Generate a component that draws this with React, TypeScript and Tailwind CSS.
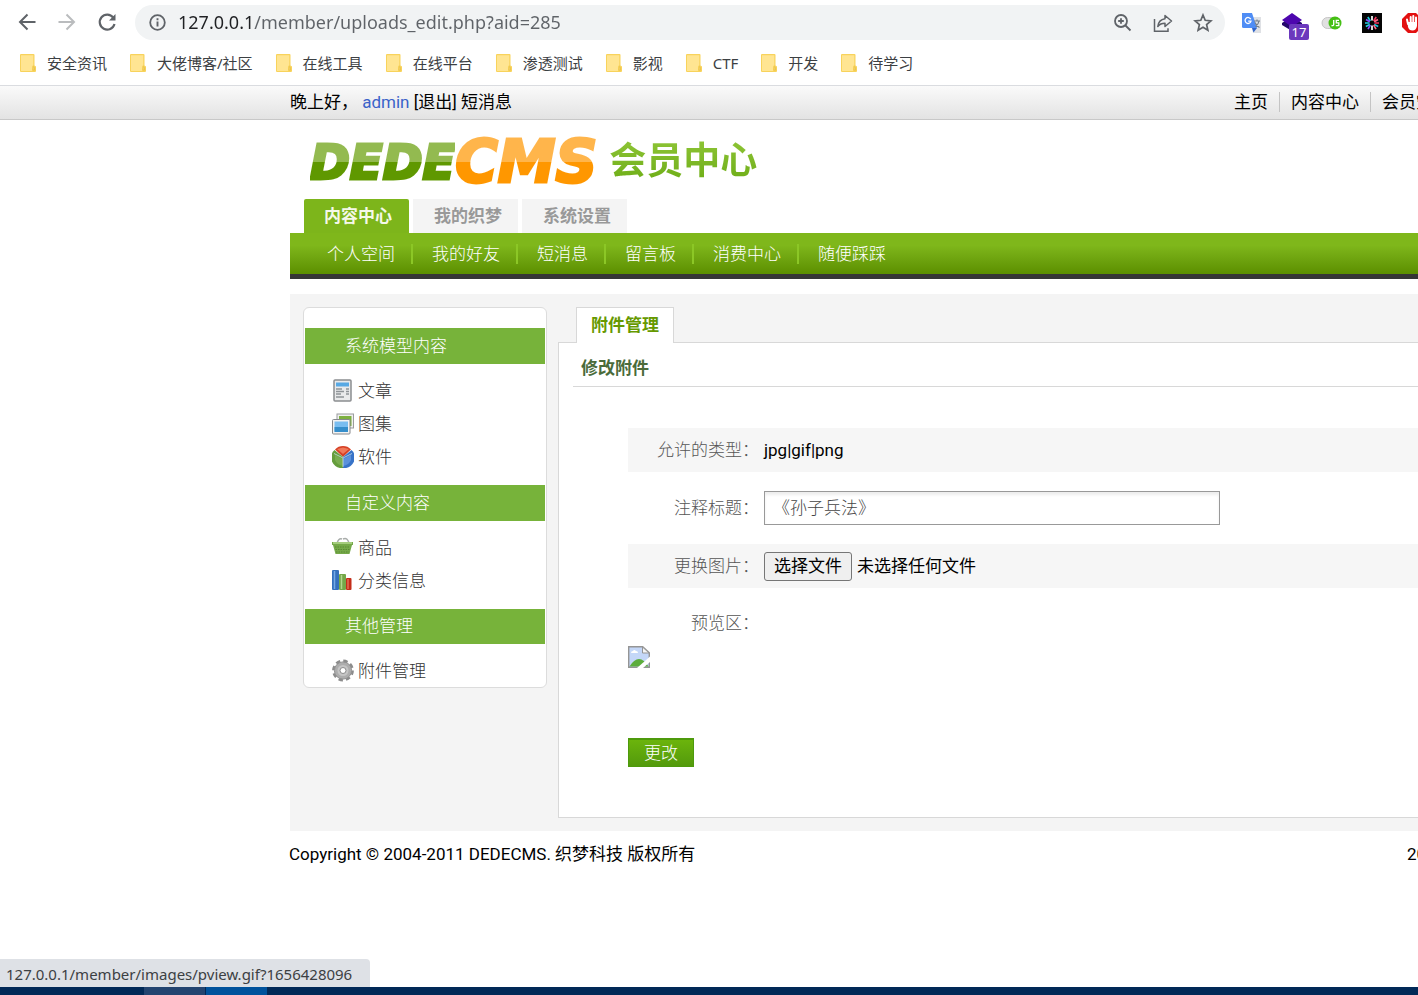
import { useRef, type ReactNode } from "react";

const bookmarks = ["安全资讯", "大佬博客/社区", "在线工具", "在线平台", "渗透测试", "影视", "CTF", "开发", "待学习"];
const subNav = ["个人空间", "我的好友", "短消息", "留言板", "消费中心", "随便踩踩"];

function FolderIcon() {
  return (
    <svg className="h-[18px] w-4 shrink-0" viewBox="0 0 16 18">
      <path d="M1 0h12.500a1 1 0 0 1 1 1v10.500l1.500 1v4.500a1 1 0 0 1-1 1H1a1 1 0 0 1-1-1V1a1 1 0 0 1 1-1z" fill="#f8d35c" />
      <path d="M1 1.200h12.300V11L12 12.500V17H1z" fill="#ffe592" />
      <path d="M13.500 12.500q1.500 0 1 3.500h-1.500z" fill="#ffe592" stroke="#e9c044" strokeWidth=".8" />
    </svg>
  );
}

function BrowserToolbar() {
  return (
    <div className="flex h-[45px] items-center overflow-hidden">
      <div className="flex w-[135px] shrink-0 items-center gap-4 pl-[15px]">
        <button aria-label="Back" className="size-6">
          <svg viewBox="0 0 24 24" fill="none" stroke="#5f6368" strokeWidth="2"><path d="M20.500 11H5.500M12.500 3.500L5 11l7.500 7.500" /></svg>
        </button>
        <button aria-label="Forward" className="size-6">
          <svg viewBox="0 0 24 24" fill="none" stroke="#babcbe" strokeWidth="2"><path d="M3.500 11h15M11.500 3.500L19 11l-7.500 7.500" /></svg>
        </button>
        <button aria-label="Reload" className="size-6">
          <svg viewBox="0 0 24 24" fill="none" stroke="#5f6368" strokeWidth="2.200"><path d="M18.200 6.500A7.500 7.500 0 1 0 19.500 13" /><path d="M20.500 3v6.500H14z" fill="#5f6368" stroke="none" /></svg>
        </button>
      </div>
      <div className="flex h-[35px] min-w-0 flex-1 items-center rounded-full bg-[#f1f3f4] pr-3 pl-[14px]">
        <svg className="size-[17px] shrink-0" viewBox="0 0 17 17" fill="none" stroke="#5f6368"><circle cx="8.500" cy="8.500" r="7.300" strokeWidth="1.800" /><path d="M8.500 7.500v5M8.500 4.200v2" strokeWidth="1.900" /></svg>
        <input
          aria-label="Address"
          className="ml-3 h-8 min-w-0 flex-1 bg-linear-to-r from-[#202124] from-[74px] to-[#5f6368] to-[74px] bg-clip-text pb-[2px] font-['Noto_Sans','Noto_Sans_CJK_SC',sans-serif] text-lg text-transparent caret-[#202124] outline-none"
          defaultValue="127.0.0.1/member/uploads_edit.php?aid=285"
        />
        <div className="flex items-center gap-5">
          <button aria-label="Zoom" className="size-5">
            <svg viewBox="0 0 20 20" fill="none" stroke="#5f6368" strokeWidth="1.800"><circle cx="8" cy="8" r="6" /><path d="M12.500 12.500l5 5M8 5.200v5.600M5.200 8h5.600" /></svg>
          </button>
          <button aria-label="Share" className="size-5">
            <svg viewBox="0 0 20 20" fill="none" stroke="#5f6368" strokeWidth="1.500"><path d="M1.500 6v12.300h13.500v-3" /><path d="M12 2.500l6.500 5.500L12 13.500v-3.200c-3.500 0-5.500 1-7.200 3.200.5-4.500 3-7.200 7.200-7.800z" strokeLinejoin="round" /></svg>
          </button>
          <button aria-label="Bookmark" className="size-5">
            <svg viewBox="0 0 20 20" fill="none" stroke="#5f6368" strokeWidth="1.700"><path d="M10 2l2.200 5.300 5.700.5-4.300 3.800 1.300 5.600L10 14.200l-4.900 3 1.300-5.600L2.100 7.800l5.700-.5z" /></svg>
          </button>
        </div>
      </div>
      <div className="flex h-full w-[193px] shrink-0 items-center gap-[18px] overflow-hidden pl-4">
        <svg className="size-[22px] shrink-0" viewBox="0 0 22 22">
          <path d="M8 5h12v16H12z" fill="#dfe1e5" />
          <path d="M1 1h10l5 15H2.500A1.500 1.500 0 0 1 1 14.500z" fill="#4f8df5" />
          <path d="M11 16h5l-3.500 4.500z" fill="#3064c8" />
          <path d="M9.800 7.200A3 3 0 1 0 10 9.200H7.200" fill="none" stroke="#fff" strokeWidth="1.300" />
          <path d="M13 9h6M16 7.500V9M18 9c-.5 3-2 4.500-3.500 5.500M14 10.500c1 2.500 2.500 4 4.500 5" fill="none" stroke="#75808c" strokeWidth="1.200" />
        </svg>
        <div className="relative size-[22px] shrink-0">
          <svg viewBox="0 0 22 22"><path d="M1 11l3-2h14l3 2v2l-10 6L1 13z" fill="#24086b" /><path d="M11 1l10 7-10 7L1 8z" fill="#4d06ae" /></svg>
          <span className="absolute top-3 left-2 h-4 w-5 rounded-xs bg-[#6b38bd] text-center font-['Noto_Sans',sans-serif] text-[13px] leading-4 text-white">17</span>
        </div>
        <svg className="size-[22px] shrink-0" viewBox="0 0 22 22">
          <rect x="1" y="5.500" width="18" height="11" rx="5.500" fill="#e0e0e0" stroke="#bbb" strokeWidth=".8" />
          <circle cx="14" cy="11" r="6.500" fill="#44bf13" />
          <path d="M12.700 8v4.500q0 1.500-2.200 1M18 8.300h-2.700v2.500h2.500v2.900h-3" fill="none" stroke="#fff" strokeWidth="1.300" />
        </svg>
        <svg className="size-[22px] shrink-0" viewBox="0 0 22 22" strokeWidth="1.700">
          <rect x="1" y="1" width="20" height="20" fill="#050505" />
          <path d="M11 4v4.500M11 13.500V18" stroke="#fff" />
          <path d="M12.700 9l2.500-4M13.500 11H18" stroke="#f5365f" />
          <path d="M9.300 9L6.800 5M13.200 12.500l4 2" stroke="#19c7de" />
          <path d="M4 11h4.500M8.800 12.500l-4 2" stroke="#23d0e8" />
          <path d="M8.800 9.700L5 7.500M9.300 13.200l-2.300 4" stroke="#8d4eff" />
          <path d="M12.700 13.200l2.300 4M13.200 9.700L17 7.500" stroke="#ff6988" />
        </svg>
        <svg className="size-[22px] shrink-0" viewBox="0 0 22 22">
          <path d="M7 1h8l6 6v8l-6 6H7l-6-6V7z" fill="#e31010" />
          <path d="M7 12l-1-4.500M9.700 11V5M12.300 11V4M15 11V5.500" stroke="#fff" strokeWidth="2" strokeLinecap="round" />
          <path d="M6.500 10h9.500v4q-1 4.500-4.500 4.500T7 15z" fill="#fff" />
        </svg>
      </div>
    </div>
  );
}

function BookmarkBar() {
  return (
    <nav aria-label="Bookmarks" className="flex h-[41px] gap-[23px] border-b border-[#dadce0] pt-[3px] pl-5 font-['Noto_Sans','Noto_Sans_CJK_SC',sans-serif] text-[15px] text-[#3c4043]">
      {bookmarks.map((name) => (
        <a key={name} href="#" className="flex h-[30px] items-center gap-[11px] whitespace-nowrap">
          <FolderIcon />
          {name}
        </a>
      ))}
    </nav>
  );
}

function TopBar() {
  return (
    <div className="flex h-[34px] items-center justify-between border-b border-[#c8c8c8] bg-linear-to-b from-[#fafafa] to-[#e3e3e3] pb-px pl-[290px] whitespace-nowrap">
      <p>
        晚上好， <a href="#" className="text-[#3a62c9]">admin</a> [<a href="#">退出</a>] <a href="#">短消息</a>
      </p>
      <nav className="flex items-center leading-5">
        <a href="#" className="border-r border-[#c4c4c4] pr-[11px]">主页</a>
        <a href="#" className="border-r border-[#c4c4c4] px-[11px]">内容中心</a>
        <a href="#" className="w-[47px] overflow-hidden pl-[11px]">会员空间</a>
      </nav>
    </div>
  );
}

function Header() {
  return (
    <header className="ml-[290px]">
      <h1 className="flex h-[79px] items-center pt-1 pl-5 leading-[60px] font-bold">
        <span className="bg-linear-to-b from-[#93ba50] from-50% to-[#5f9800] to-50% bg-clip-text font-['DejaVu_Sans',sans-serif] text-5xl leading-[60px] text-transparent italic [-webkit-text-stroke:3px_transparent]">DEDE</span>
        <span className="bg-linear-to-b from-[#ffb54b] from-50% to-[#ff9700] to-50% bg-clip-text pr-3 font-['DejaVu_Sans',sans-serif] text-[58px] text-transparent italic [-webkit-text-stroke:3px_transparent]">CMS</span>
        <span className="bg-linear-to-b from-[#93c83a] to-[#66a808] bg-clip-text text-[37px] leading-[60px] text-transparent">会员中心</span>
      </h1>
      <nav className="flex gap-1 pl-[14px] leading-[34px] font-bold text-[#999]">
        <a href="#" className="w-[105px] rounded-t-xs bg-[#7db51b] pl-5 text-[#f4f8e8]">内容中心</a>
        <a href="#" className="w-[105px] bg-[#f4f4f4] pl-[21px]">我的织梦</a>
        <a href="#" className="w-[105px] bg-[#f4f4f4] pl-[21px]">系统设置</a>
      </nav>
      <nav className="flex h-[46px] items-center border-b-[5px] border-[#363636] bg-linear-to-b from-[#7fb71b] from-30% to-[#5c8f00] pl-[18px] font-light text-white">
        {subNav.map((name) => (
          <a key={name} href="#" className="border-r-2 border-[#8cc726] pr-4 pl-[19px] leading-5 last:border-r-0">{name}</a>
        ))}
      </nav>
    </header>
  );
}

const icons: Record<string, ReactNode> = {
  文章: (
    <>
      <rect x="2" y="1" width="17" height="21" rx="1" fill="#e9eaeb" stroke="#8b8d90" strokeWidth="1.500" />
      <path d="M4 3.500h13v4H4z" fill="#58a9e4" />
      <path d="M4 10h6M4 12.500h8M4 15h5M4 18h8M14 10h3M14 12.500h3M14 15h3" stroke="#8f9498" strokeWidth="1.300" />
    </>
  ),
  图集: (
    <>
      <rect x="5" y="2" width="16.500" height="14" fill="#f0f0f0" stroke="#9a9c9e" />
      <path d="M7 4h12.500v10H7z" fill="#7db040" />
      <rect x=".5" y="7.500" width="17.500" height="14.500" rx="1" fill="#f2f2f2" stroke="#85888c" />
      <path d="M2.500 9.500h13.500v10H2.500z" fill="#79bdf0" />
      <path d="M2.500 15h13.500v5H2.500z" fill="#358ecb" />
    </>
  ),
  软件: (
    <>
      <path d="M11 12L3 4.500A11 11 0 0 1 19 4.500z" fill="#d64125" />
      <path d="M11 12v11A10.500 10.500 0 0 1 2.500 5z" fill="#659d3c" />
      <path d="M11 12v11A10.500 10.500 0 0 0 19.500 5z" fill="#3773c8" />
      <path d="M5 4l6-1.500L17 4l-6 5z" fill="#f0795a" />
      <path d="M3 10l8 4v7q-6-1-8-6z" fill="#8dbd62" opacity=".5" />
      <path d="M19 10l-8 4v7q6-1 8-6z" fill="#7fb0ee" opacity=".5" />
      <path d="M2 8.500l9 4.500 9-4.500M11 13v9" fill="none" stroke="#c6dce2" strokeWidth=".8" />
    </>
  ),
  商品: (
    <>
      <path d="M5 8q1-6 5-5M11 3q5-2 6 5" fill="none" stroke="#a9adab" strokeWidth="1.500" />
      <path d="M0 6h21v3h-1l-2.500 9h-14L1 9H0z" fill="#75a949" />
      <path d="M1 7h19" stroke="#b4d98f" strokeWidth="1.500" />
      <path d="M3 11h15M3.500 13.500h14M4 16h13" stroke="#5b8a35" strokeDasharray="1.500 1" />
    </>
  ),
  分类信息: (
    <>
      <rect x="0" y="1" width="7" height="20" rx="1" fill="#3570bd" />
      <path d="M2.500 2v18" stroke="#74aae6" strokeWidth="1.500" />
      <rect x="7" y="5" width="7" height="16" rx="1" fill="#74a749" />
      <path d="M9.500 6v14" stroke="#b1d78d" strokeWidth="1.500" />
      <rect x="14" y="9" width="5.500" height="12" rx="1" fill="#c42d19" />
      <path d="M16 10v10" stroke="#ee7560" strokeWidth="1.300" />
    </>
  ),
  附件管理: (
    <>
      <circle cx="11" cy="11.500" r="9.200" fill="none" stroke="#8c8c8c" strokeWidth="3.400" strokeDasharray="4.225 3" />
      <circle cx="11" cy="11.500" r="8.600" fill="#adadad" stroke="#929292" />
      <circle cx="11" cy="11.500" r="5.500" fill="#c5c5c5" />
      <circle cx="11" cy="11.500" r="3" fill="#fff" stroke="#8c8c8c" />
    </>
  ),
};

const sections = [
  { title: "系统模型内容", items: ["文章", "图集", "软件"] },
  { title: "自定义内容", items: ["商品", "分类信息"] },
  { title: "其他管理", items: ["附件管理"] },
];

function Sidebar() {
  return (
    <aside className="w-[244px] shrink-0 self-start rounded-md border border-[#dcdcdc] bg-white px-px pt-5">
      {sections.map(({ title, items }) => (
        <section key={title} className="group pb-3 last:pb-0">
          <h2 className="bg-[#77b33a] pl-10 leading-9 font-light text-white group-last:leading-[35px]">{title}</h2>
          <ul className="pt-[10px] pl-[27px]">
            {items.map((name) => (
              <li key={name}>
                <a href="#" className="flex h-[33px] items-center gap-1 font-light text-[#333]">
                  <svg className="h-[23px] w-[22px]" viewBox="0 0 22 23">{icons[name]}</svg>
                  {name}
                </a>
              </li>
            ))}
          </ul>
        </section>
      ))}
    </aside>
  );
}

function BrokenImage() {
  return (
    <svg role="img" aria-label="预览" className="size-[22px]" viewBox="0 0 22 22">
      <path d="M.7.700h14l6.600 6v14.600H.7z" fill="#c4d7f8" stroke="#959595" strokeWidth="1.400" />
      <path d="M14.500 1v6H21z" fill="#f6f6f6" stroke="#959595" />
      <path d="M3 7q0-2 2-2 1-2 3 0 2 0 2 2z" fill="#fff" />
      <path d="M1.500 20.500Q6 13 11 13t9.500 7.500z" fill="#5cad3c" />
      <path d="M22 10.500L9 22h6l7-6z" fill="#fff" />
    </svg>
  );
}

const labelClass = "w-[131px] shrink-0 text-right font-light text-[#555]";

function EditForm() {
  const file = useRef<HTMLInputElement>(null);
  return (
    <form className="mt-[41px] ml-[69px]" onSubmit={(e) => e.preventDefault()}>
      <div className="flex h-11 items-center gap-[5px] bg-[#f6f6f6]">
        <span className={labelClass}>允许的类型：</span>
        <span>jpg|gif|png</span>
      </div>
      <div className="flex h-[72px] items-center gap-[5px]">
        <label htmlFor="title" className={labelClass}>注释标题：</label>
        <input id="title" defaultValue="《孙子兵法》" className="h-[34px] w-[456px] border border-[#999] bg-white px-2 pb-[3px] font-light text-[#444] shadow-[inset_0_3px_3px_#eee] outline-none" />
      </div>
      <div className="flex h-11 items-center gap-[5px] bg-[#f6f6f6]">
        <label htmlFor="file" className={labelClass}>更换图片：</label>
        <input id="file" ref={file} type="file" className="hidden" />
        <button type="button" onClick={() => file.current?.click()} className="h-[29px] w-[88px] rounded-[3px] border border-[#767676] bg-[#efefef]">选择文件</button>
        <span>未选择任何文件</span>
      </div>
      <div className="flex h-[58px] items-center pt-3">
        <span className={labelClass}>预览区：</span>
      </div>
      <BrokenImage />
      <button type="submit" className="mt-[70px] mb-[50px] block h-[29px] w-[66px] border border-t-2 border-[#4d9a0c] bg-linear-to-b from-[#6bb40c] to-[#539a0c] leading-6 font-light text-white">更改</button>
    </form>
  );
}

export default function App() {
  return (
    <div className="flex min-h-screen flex-col overflow-hidden bg-white font-['Roboto','Noto_Sans_CJK_SC',sans-serif] text-[17px] leading-6 text-black">
      <BrowserToolbar />
      <BookmarkBar />
      <TopBar />
      <Header />
      <div className="mt-[15px] ml-[290px] flex gap-[11px] bg-[#f4f4f4] py-[13px] pl-[13px]">
        <Sidebar />
        <main className="min-w-0 flex-1">
          <div className="ml-[18px] flex">
            <a href="#" className="relative -mb-px w-[98px] border border-b-0 border-[#d8d8d8] bg-white text-center leading-[35px] font-bold text-[#669900]">附件管理</a>
          </div>
          <div className="border border-r-0 border-[#d8d8d8] bg-white">
            <h2 className="ml-[14px] h-11 border-b border-[#d8d8d8] pt-[13px] pl-2 font-bold text-[#4a6b3a]">修改附件</h2>
            <EditForm />
          </div>
        </main>
      </div>
      <footer className="mt-[11px] flex justify-between pl-[289px] whitespace-nowrap">
        <p>Copyright © 2004-2011 DEDECMS. 织梦科技 版权所有</p>
        <p className="w-[11px] overflow-hidden">2022</p>
      </footer>
      <div className="mt-auto">
        <p className="h-7 w-[370px] rounded-tr-sm bg-[#dee1e6] pl-[6px] font-['Noto_Sans',sans-serif] text-[15px] leading-[30px] text-[#3c4043]">127.0.0.1/member/images/pview.gif?1656428096</p>
        <div className="flex h-2 bg-[#012957] pl-36">
          <span className="w-[62px] border-r border-[#012957] bg-[#234470]" />
          <span className="w-[61px] bg-[#00529c]" />
        </div>
      </div>
    </div>
  );
}
